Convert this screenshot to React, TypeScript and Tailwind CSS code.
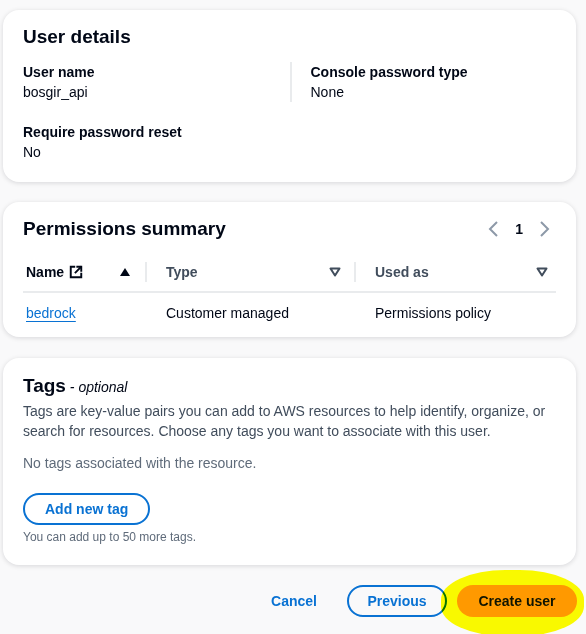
import React from "react";

const font = { fontFamily: '"Liberation Sans", Arial, sans-serif' };

function ExternalIcon() {
  return (
    <svg width="14" height="14" viewBox="0 0 16 16" fill="none" stroke="#000716" strokeWidth="2.2" strokeLinecap="square">
      <path d="M6 2H2v12h12v-4" />
      <path d="M9.5 2H14v4.5" />
      <path d="M13.5 2.5L7.5 8.5" />
    </svg>
  );
}

function SortUp() {
  return (
    <svg width="12" height="10" viewBox="0 0 12 10">
      <path d="M6 1L11 9H1z" fill="#000716" />
    </svg>
  );
}

function SortDown() {
  return (
    <svg width="12" height="10" viewBox="0 0 12 10" fill="none" stroke="#414d5c" strokeWidth="2" strokeLinejoin="round">
      <path d="M1.5 1.5h9L6 8.5z" />
    </svg>
  );
}

function Chevron({ dir }: { dir: "left" | "right" }) {
  return (
    <svg width="12" height="16" viewBox="0 0 12 16" fill="none" stroke="#8d99a8" strokeWidth="2" strokeLinejoin="miter">
      {dir === "left" ? <path d="M9 1L2 8l7 7" /> : <path d="M3 1l7 7-7 7" />}
    </svg>
  );
}

function Card({ children, className = "" }: { children: React.ReactNode; className?: string }) {
  return (
    <div className={`bg-white rounded-2xl shadow-[0_1px_5px_rgba(0,7,22,0.14)] px-5 ${className}`}>
      {children}
    </div>
  );
}

export default function App() {
  return (
    <div className="w-[586px] h-[634px] overflow-hidden bg-[#f9f9fa] pl-[3px] pr-[10px] pt-[10px] text-[#000716]" style={font}>
      {/* ── User details ── */}
      <Card className="pt-[13px] pb-5">
        <h2 className="text-[19px] font-bold leading-7">User details</h2>
        <div className="grid grid-cols-2 mt-[11px]">
          <div>
            <p className="text-sm font-bold leading-5">User name</p>
            <p className="text-sm leading-5">bosgir_api</p>
          </div>
          <div className="border-l-2 border-[#e9ebed] pl-[19px]">
            <p className="text-sm font-bold leading-5">Console password type</p>
            <p className="text-sm leading-5">None</p>
          </div>
        </div>
        <div className="mt-5">
          <p className="text-sm font-bold leading-5">Require password reset</p>
          <p className="text-sm leading-5">No</p>
        </div>
      </Card>

      {/* ── Permissions summary ── */}
      <Card className="mt-5 pt-[13px] pb-1">
        <div className="flex items-center justify-between">
          <h2 className="text-[19px] font-bold leading-7">Permissions summary</h2>
          <div className="flex items-center gap-[15px] pr-[6px]">
            <Chevron dir="left" />
            <span className="text-sm font-bold">1</span>
            <Chevron dir="right" />
          </div>
        </div>
        <div className="mt-[10px] grid grid-cols-[122px_209px_1fr] h-10 items-center border-b-2 border-[#e9ebed] text-sm">
          <div className="flex items-center justify-between pl-[3px] pr-[14px]">
            <span className="flex items-center gap-[5px] font-bold">
              Name <ExternalIcon />
            </span>
            <SortUp />
          </div>
          <div className="flex items-center justify-between border-l-2 border-[#e9ebed] pl-[19px] pr-[13px] h-5">
            <span className="font-bold text-[#414d5c]">Type</span>
            <SortDown />
          </div>
          <div className="flex items-center justify-between border-l-2 border-[#e9ebed] pl-[19px] pr-[8px] h-5">
            <span className="font-bold text-[#414d5c]">Used as</span>
            <SortDown />
          </div>
        </div>
        <div className="grid grid-cols-[122px_209px_1fr] h-10 items-center text-sm">
          <div className="pl-[3px]">
            <a className="text-[#0972d3] underline underline-offset-[3px] decoration-1">bedrock</a>
          </div>
          <div className="pl-[21px]">Customer managed</div>
          <div className="pl-[21px]">Permissions policy</div>
        </div>
      </Card>

      {/* ── Tags ── */}
      <Card className="mt-[21px] pt-[14px] pb-5">
        <h2 className="leading-7">
          <span className="text-[19px] font-bold">Tags</span>
          <span className="text-sm italic"> - optional</span>
        </h2>
        <p className="text-sm leading-5 text-[#414d5c]">
          Tags are key-value pairs you can add to AWS resources to help identify, organize, or search for resources. Choose any tags you want to associate with this user.
        </p>
        <p className="mt-3 text-sm leading-5 text-[#5f6b7a]">No tags associated with the resource.</p>
        <button className="mt-5 h-8 px-5 rounded-full border-2 border-[#0972d3] text-[#0972d3] text-sm font-bold">
          Add new tag
        </button>
        <p className="mt-[4px] text-xs leading-4 text-[#5f6b7a]">You can add up to 50 more tags.</p>
      </Card>

      {/* ── Footer actions ── */}
      <div className="relative flex justify-end items-center gap-[10px] mt-5 mr-[-1px]">
        <button className="h-8 px-5 text-sm font-bold text-[#0972d3]">Cancel</button>
        <button className="h-8 w-[100px] rounded-full border-2 border-[#0972d3] text-sm font-bold text-[#0972d3]">
          Previous
        </button>
        <button className="h-8 w-[120px] rounded-full bg-[#ff9900] text-sm font-bold text-[#0f141a]">
          Create user
        </button>
        {/* yellow marker highlight */}
        <div className="absolute right-[-7px] top-[-15px] w-[143px] h-[66px] rounded-[45%] bg-[#ffff00] mix-blend-multiply pointer-events-none" />
      </div>
    </div>
  );
}
